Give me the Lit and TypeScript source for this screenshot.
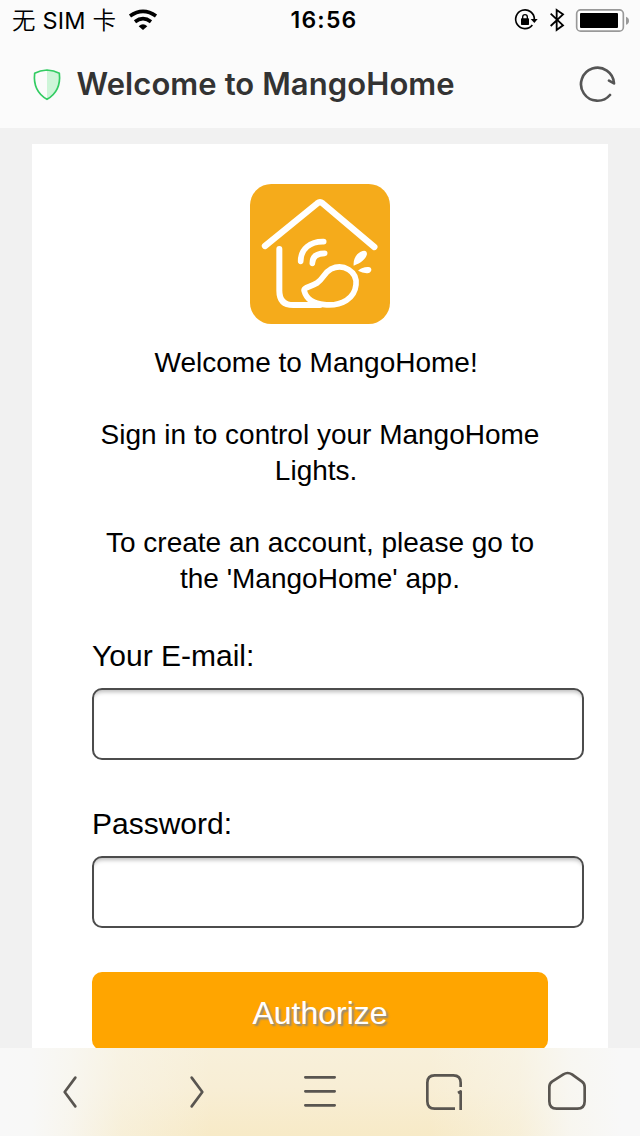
import { LitElement, html, css, svg } from "lit";
import { customElement } from "lit/decorators.js";

const wifi = svg`<svg class="wifi" viewBox="384 24 90 72" width="30" height="24" fill="none" stroke="#000">
  <path d="M390 48Q429 20 468 48" stroke-width="11"/>
  <path d="M405 65Q429 47 453 65" stroke-width="11"/>
  <path d="M429 90L416 79Q429 67 442 79Z" fill="#000" stroke="none"/>
</svg>`;

@customElement("status-bar")
class StatusBar extends LitElement {
  static styles = css`
    :host { display: grid; grid-template-columns: 1fr auto 1fr; grid-template-rows: 40px; height: 40px; align-items: center; color: #000; }
    .left { display: flex; align-items: center; padding-left: 12px; }
    .carrier { font: 23.5px/38px Inter, "Noto Sans CJK SC", sans-serif; letter-spacing: 0.2px; white-space: pre; height: 40px; }
    .cjk { font: 350 23.5px/38px "Noto Sans CJK SC", sans-serif; }
    .wifi { margin-left: 12px; }
    .time { font: 600 23px/40px Inter, sans-serif; letter-spacing: 1.2px; padding-left: 8px; }
    .right { justify-self: end; display: block; margin-right: 8px; }
  `;
  render() {
    return html`
      <div class="left">
        <span class="carrier"><span class="cjk">无</span> SIM <span class="cjk">卡</span></span>
        ${wifi}
      </div>
      <div class="time">16:56</div>
      <svg class="right" viewBox="216 0 360 120" width="120" height="40">
        <path d="M277 75A28 28 0 1 1 283 58" fill="none" stroke="#000" stroke-width="5"/>
        <path d="M272 57H293L283 69Z"/>
        <rect x="243" y="55" width="24" height="20" rx="2"/>
        <path d="M248 57V51a7 7 0 0 1 14 0V57" fill="none" stroke="#000" stroke-width="4"/>
        <path d="M332 41L369 76L350 90V30L369 43L332 78" fill="none" stroke="#000" stroke-width="5.500"/>
        <rect x="410" y="29.500" width="140" height="64" rx="12" fill="#fff" stroke="#999" stroke-width="5"/>
        <rect x="420" y="39" width="114" height="45" rx="3"/>
        <path d="M558 50Q567 53 567 62T558 74Z" fill="#999"/>
      </svg>`;
  }
}

@customElement("title-bar")
class TitleBar extends LitElement {
  static styles = css`
    :host { display: flex; align-items: center; height: 88px; padding: 0 18px 0 30px; box-sizing: border-box; }
    .title { flex: 1; margin-left: 12.5px; font: 600 31px/86px Inter, sans-serif; letter-spacing: 0.08px; color: #333; white-space: nowrap; }
  `;
  render() {
    return html`
      <svg viewBox="90 195 102 114" width="34" height="38">
        <path d="M141 210Q162 211 178 221V236Q177 276 141 298Z" fill="#cdf5d8"/>
        <path d="M141 210Q162 211 178 220Q184 273 141 298Q98 273 104 220Q120 211 141 210Z" fill="none" stroke="#32cc62" stroke-width="5" stroke-linejoin="round"/>
      </svg>
      <span class="title">Welcome to MangoHome</span>
      <svg viewBox="414 191 132 126" width="44" height="42" fill="none" stroke="#555" stroke-width="8" stroke-linecap="round" stroke-linejoin="round">
        <path d="M510 287A49.500 49.500 0 1 1 522 252L507 244"/>
      </svg>`;
  }
}

@customElement("sign-in-card")
class SignInCard extends LitElement {
  static styles = css`
    :host { display: block; box-sizing: border-box; background: #fff; height: 904px; padding: 40px 60px 0; overflow: hidden; font-family: "Liberation Sans", Arial, sans-serif; color: #000; }
    .logo { display: block; margin: 0 auto 21px; }
    .copy { text-align: center; font-size: 28px; line-height: 36px; white-space: nowrap; }
    .line { height: 36px; }
    .gap { margin-top: 36px; }
    .field { display: block; }
    .label { display: block; font-size: 30px; line-height: 36px; height: 36px; }
    .input { display: block; box-sizing: border-box; width: 492px; height: 72px; margin: 14px 0 0; padding: 0 12px; border: 2px solid #4c4c4c; border-radius: 10px; background: #fff; box-shadow: inset 0 5px 4px -3px #bbb; font-size: 30px; outline: none; appearance: none; }
    .first { margin-top: 41px; }
    .second { margin-top: 46px; }
    .button { display: block; width: 456px; height: 78px; margin-top: 44px; padding: 4px 0 0; border: 0; border-radius: 10px; background: #ffa500; color: #fff; font: 32px/74px "Liberation Sans", Arial, sans-serif; text-shadow: 2px 2px 2px #888; }
  `;
  render() {
    return html`
      <svg class="logo" viewBox="30 30 420 420" width="140" height="140" fill="none" stroke="#fff" stroke-width="19" stroke-linecap="round" stroke-linejoin="round">
        <rect x="30" y="30" width="420" height="420" rx="64" fill="#f5ab1b" stroke="none"/>
        <path d="M75 216L232 88Q240 82 248 88L403 219"/>
        <path d="M118 225V350Q118 393 160 393H240" stroke-width="18"/>
        <path d="M193 352C188 339 211 340 231 327C252 313 252 296 273 285C310 267 352 292 348 332C344 372 307 397 253 392C218 389 199 374 193 352Z" stroke-width="17"/>
        <path d="M182 262C182 224 211 202 251 203M217 268C217 246 231 238 254 238" stroke-width="17"/>
        <path d="M341 275C339 254 350 237 368 231Q380 228 381 240C377 256 363 267 341 275ZM354 290Q368 278 385 279Q395 280 394 289Q391 299 380 298Q367 297 354 290Z" fill="#fff" stroke="none"/>
      </svg>
      <div class="copy">
        <div class="line">Welcome to MangoHome!&nbsp;</div>
        <div class="line gap">Sign in to control your MangoHome</div>
        <div class="line">Lights.&nbsp;</div>
        <div class="line gap">To create an account, please go to</div>
        <div class="line">the 'MangoHome' app.</div>
      </div>
      <label class="field first"><span class="label">Your E-mail:</span><input class="input" type="email"></label>
      <label class="field second"><span class="label">Password:</span><input class="input" type="password"></label>
      <button class="button">Authorize</button>`;
  }
}

@customElement("bottom-nav")
class BottomNav extends LitElement {
  static styles = css`
    :host { display: block; height: 88px; background: linear-gradient(90deg, #f8f8f8 0, #f8f8f7 5%, rgba(248,248,246,.8) 11%, rgba(248,247,242,.4) 19%, rgba(248,240,218,0) 33%, rgba(248,240,218,0) 67%, rgba(248,247,242,.4) 81%, rgba(248,248,246,.85) 89%, #f8f8f8 97%), linear-gradient(#f8f0da, #f8eed5 45%, #f7eac7); }
    .icons { display: block; }
  `;
  render() {
    return html`
      <svg class="icons" viewBox="0 54 1920 264" width="640" height="88" fill="none" stroke="#595550" stroke-width="8" stroke-linecap="round" stroke-linejoin="round">
        <path d="M226 143L194 186L226 229"/>
        <path d="M575 143L607 186L575 229"/>
        <path d="M916 142H1004M916 184H1004M916 226H1004"/>
        <path d="M1382 171V158Q1382 136 1360 136H1304Q1282 136 1282 158V214Q1282 236 1304 236H1365" stroke-linecap="butt"/>
        <path d="M1374 189L1382 184V240" stroke-linecap="butt"/>
        <path d="M1648 171Q1648 161 1656 155L1690 133Q1703 125 1716 133L1746 155Q1754 161 1754 171V214Q1754 236 1732 236H1670Q1648 236 1648 214Z"/>
      </svg>`;
  }
}

@customElement("app-root")
class AppRoot extends LitElement {
  static styles = css`
    :host { display: flex; flex-direction: column; height: 1136px; overflow: hidden; background: #f1f1f1; }
    .header { background: #fbfbfb; height: 128px; }
    .page { flex: 1; min-height: 0; padding: 16px 32px 0; overflow: hidden; }
  `;
  render() {
    return html`
      <div class="header"><status-bar></status-bar><title-bar></title-bar></div>
      <div class="page"><sign-in-card></sign-in-card></div>
      <bottom-nav></bottom-nav>`;
  }
}
